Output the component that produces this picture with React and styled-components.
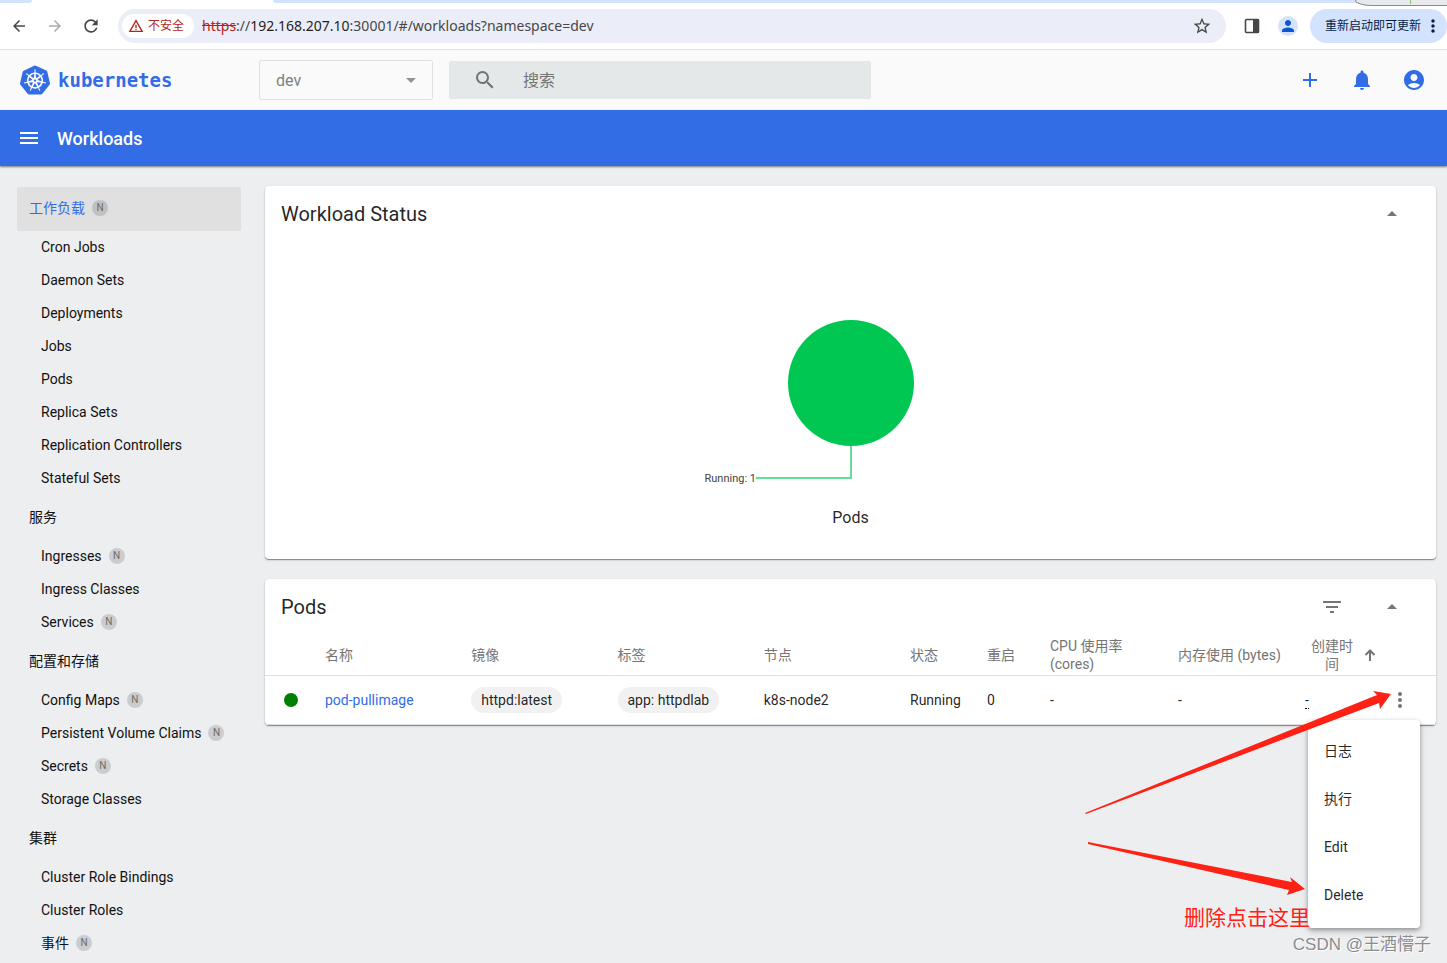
import React, { PureComponent } from 'react';
import styled, { createGlobalStyle } from 'styled-components';
import {
  MdAccountCircle,
  MdAdd,
  MdArrowBack,
  MdArrowDropDown,
  MdArrowDropUp,
  MdArrowForward,
  MdFilterList,
  MdMenu,
  MdMoreVert,
  MdNotifications,
  MdPerson,
  MdRefresh,
  MdSearch,
  MdStarBorder,
  MdWarningAmber
} from 'react-icons/md';
import { SiKubernetes } from 'react-icons/si';

const colors = {
  primary: '#326de6',
  background: '#edeef0',
  text: 'rgba(0, 0, 0, 0.87)',
  muted: 'rgba(0, 0, 0, 0.54)',
  divider: '#e0e0e0',
  chromeBlue: '#d3e3fd',
  annotation: '#ff2113'
};

const GlobalStyle = createGlobalStyle`
  * {
    box-sizing: border-box;
  }
  body {
    margin: 0;
    overflow: hidden;
    background-color: ${colors.background};
    font-family: Roboto, "Noto Sans CJK SC", sans-serif;
    font-size: 14px;
    color: ${colors.text};
  }
  button, input, select {
    font-family: inherit;
  }
`;

const Page = styled.div`
  position: relative;
  min-height: 100vh;
`;

const IconButton = styled.button`
  display: flex;
  align-items: center;
  justify-content: center;
  flex-shrink: 0;
  width: 24px;
  height: 24px;
  padding: 0;
  border: none;
  background: none;
  color: ${({ $color }) => $color || colors.muted};
  cursor: pointer;
`;

/* browser bar */

const TabStrip = styled.div`
  position: relative;
  display: flex;
  height: 3px;
  background-color: #ffffff;
`;

const TabEdge = styled.div`
  width: 32px;
  background-color: ${colors.chromeBlue};
  border-bottom-right-radius: 3px;
`;

const TabRest = styled.div`
  flex: 1;
  margin-left: 241px;
  background-color: ${colors.chromeBlue};
  border-bottom-left-radius: 3px;
`;

const FloatingTip = styled.div`
  position: absolute;
  top: 0;
  right: 0;
  width: 92px;
  height: 6px;
  border-bottom: 1px solid #8a8a8a;
  border-left: 1px solid #8a8a8a;
  border-bottom-left-radius: 16px 6px;
  background: linear-gradient(#8fc36b, #8fc36b) 54px 0 / 1px 4px no-repeat #e8eaed;
`;

const Toolbar = styled.div`
  display: flex;
  align-items: center;
  height: 47px;
  padding-left: 7px;
  border-bottom: 1px solid #dfe1e5;
  background-color: #ffffff;
`;

const NavButtons = styled.div`
  display: flex;
  gap: 12px;
  margin-right: 15px;
`;

const AddressBar = styled.div`
  display: flex;
  align-items: center;
  flex: 1;
  height: 34px;
  padding: 0 12px 0 4px;
  border-radius: 17px;
  background-color: #ebeef8;
`;

const SecurityChip = styled.button`
  display: flex;
  align-items: center;
  gap: 4px;
  height: 24px;
  padding: 0 10px 0 6px;
  border: none;
  border-radius: 12px;
  background-color: #ffffff;
  font-size: 12px;
  line-height: 18px;
  white-space: nowrap;
  color: #b3261e;
`;

const Url = styled.div`
  flex: 1;
  margin-left: 8px;
  font-family: "Noto Sans", sans-serif;
  font-size: 14px;
  line-height: 20px;
  color: #474747;
`;

const Scheme = styled.s`
  color: #b3261e;
`;

const Host = styled.span`
  color: #1f1f1f;
`;

const ToolbarActions = styled.div`
  display: flex;
  align-items: center;
  gap: 12px;
  padding-left: 14px;
`;

const Avatar = styled.button`
  display: flex;
  align-items: center;
  justify-content: center;
  width: 20px;
  height: 20px;
  margin-left: 2px;
  padding: 0;
  border: none;
  border-radius: 50%;
  background-color: ${colors.chromeBlue};
  color: #0b57d0;
`;

const UpdateButton = styled.button`
  display: flex;
  align-items: center;
  gap: 2px;
  height: 34px;
  padding: 0 4px 0 15px;
  border: none;
  border-radius: 17px;
  background-color: ${colors.chromeBlue};
  font-size: 12px;
  line-height: 18px;
  white-space: nowrap;
  color: #041e49;
`;

/* dashboard header */

const Header = styled.header`
  display: flex;
  align-items: center;
  height: 60px;
  padding: 0 21px 0 20px;
  background-color: #fafafa;
`;

const Brand = styled.a`
  display: flex;
  align-items: center;
  gap: 8px;
  flex-shrink: 0;
  width: 239px;
  font-family: "DejaVu Sans Mono", monospace;
  font-size: 19px;
  font-weight: 700;
  text-decoration: none;
  color: ${colors.primary};
`;

const NamespaceField = styled.label`
  position: relative;
  flex-shrink: 0;
  width: 174px;
  margin-right: 16px;
`;

const NamespaceSelect = styled.select`
  display: block;
  width: 100%;
  height: 40px;
  padding: 0 16px;
  border: 1px solid ${colors.divider};
  border-radius: 2px;
  appearance: none;
  background: none;
  font-size: 16px;
  color: #808080;
`;

const SelectArrow = styled.span`
  position: absolute;
  top: 8px;
  right: 10px;
  height: 24px;
  color: #959595;
  pointer-events: none;
`;

const SearchField = styled.label`
  display: flex;
  align-items: center;
  flex: 0 1 422px;
  gap: 26px;
  height: 38px;
  padding-left: 24px;
  border-radius: 2px;
  background-color: #e4e8e8;
  color: #6f7272;
`;

const SearchInput = styled.input`
  flex: 1;
  min-width: 0;
  padding: 0;
  border: none;
  outline: none;
  background: none;
  font-size: 16px;
  &::placeholder {
    color: #757575;
  }
`;

const HeaderActions = styled.div`
  display: flex;
  gap: 28px;
  margin-left: auto;
`;

const TitleBar = styled.div`
  position: relative;
  display: flex;
  align-items: center;
  gap: 16px;
  height: 56px;
  padding: 0 17px;
  background-color: ${colors.primary};
  box-shadow: 0 1px 2px rgba(0, 0, 0, 0.5);
`;

const PageTitle = styled.h1`
  margin: 0;
  font-size: 18px;
  font-weight: 500;
  color: #ffffff;
`;

/* navigation */

const Body = styled.div`
  display: flex;
  gap: 24px;
  padding: 20px 11px 0 17px;
`;

const Nav = styled.nav`
  flex-shrink: 0;
  width: 224px;
`;

const NavItem = styled.a`
  display: flex;
  align-items: center;
  gap: 7px;
  height: 33px;
  padding: 0 0 2px 24px;
  line-height: 20px;
  text-decoration: none;
  color: #111111;
`;

const NavGroupItem = styled(NavItem)`
  height: 44px;
  margin-top: 1px;
  padding-left: 12px;
  border-radius: 2px;
  background-color: ${({ $active }) => ($active ? '#e0e0e0' : 'transparent')};
  color: ${({ $active }) => ($active ? colors.primary : '#111111')};
`;

const NamespacedBadge = styled.span`
  width: 16px;
  height: 16px;
  border-radius: 50%;
  background-color: rgba(0, 0, 0, 0.14);
  font-size: 10px;
  line-height: 16px;
  text-align: center;
  color: #6b6b6b;
`;

/* cards */

const Content = styled.main`
  display: flex;
  flex-direction: column;
  flex: 1;
  gap: 20px;
  min-width: 0;
`;

const Card = styled.section`
  border-radius: 4px;
  background-color: #ffffff;
  box-shadow: 0 1px 1px rgba(0, 0, 0, 0.4), 0 1px 3px rgba(0, 0, 0, 0.12);
`;

const CardHeader = styled.div`
  display: flex;
  align-items: center;
  gap: 36px;
  height: 56px;
  padding: 0 32px 0 16px;
`;

const CardTitle = styled.h2`
  flex: 1;
  margin: 0;
  font-size: 20px;
  font-weight: 400;
`;

const Chart = styled.figure`
  display: flex;
  flex-direction: column;
  align-items: center;
  margin: 0;
  padding-bottom: 29px;
`;

const ChartLabel = styled.text`
  font-size: 11px;
  fill: #444444;
`;

const ChartCaption = styled.figcaption`
  padding-top: 4px;
  font-size: 16px;
  line-height: 24px;
`;

/* pods table */

const Table = styled.table`
  width: 100%;
  border-collapse: separate;
  border-spacing: 0;
  table-layout: fixed;
  text-align: left;
`;

const Column = styled.col`
  width: ${({ $width }) => $width || 'auto'};
`;

const HeadCell = styled.th`
  height: 41px;
  padding: 0;
  border-bottom: 1px solid ${colors.divider};
  font-weight: 400;
  line-height: 18px;
  color: #757575;
`;

const SortLabel = styled.span`
  display: flex;
  align-items: center;
  gap: 8px;
  padding-left: 5px;
  text-align: center;
`;

const SortText = styled.span`
  width: 44px;
`;

const Cell = styled.td`
  height: 49px;
  padding: 0;
  border-bottom: 1px solid ${colors.divider};
  white-space: nowrap;
`;

const ActionCell = styled(Cell)`
  position: relative;
`;

const StatusDot = styled.div`
  width: 14px;
  height: 14px;
  margin-left: 19px;
  border-radius: 50%;
  background-color: #008000;
`;

const PodLink = styled.a`
  text-decoration: none;
  color: ${colors.primary};
`;

const Chip = styled.span`
  display: inline-block;
  padding: 0 10px;
  border-radius: 13px;
  background-color: #f1f1f1;
  line-height: 26px;
`;

const Age = styled.span`
  border-bottom: 1px dotted #000000;
`;

const Menu = styled.div`
  position: absolute;
  top: 44px;
  right: 16px;
  display: flex;
  flex-direction: column;
  width: 112px;
  padding: 8px 0;
  border-radius: 4px;
  background-color: #ffffff;
  box-shadow: 0 2px 4px rgba(0, 0, 0, 0.3), 0 3px 8px rgba(0, 0, 0, 0.14);
`;

const MenuItem = styled.button`
  height: 48px;
  padding: 0 16px 2px;
  border: none;
  background: none;
  font-size: 14px;
  line-height: 20px;
  text-align: left;
  color: ${colors.text};
`;

/* annotations lie over the page */

const Arrows = styled.svg`
  position: absolute;
  top: 680px;
  right: 47px;
  pointer-events: none;
`;

const Note = styled.div`
  position: absolute;
  top: 902px;
  right: 137px;
  font-size: 21px;
  line-height: 32px;
  color: ${colors.annotation};
`;

const Watermark = styled.div`
  position: absolute;
  top: 933px;
  right: 16px;
  font-family: "Liberation Sans", "Noto Sans CJK SC", sans-serif;
  font-size: 17px;
  line-height: 24px;
  color: #8b8c8e;
  text-shadow: 1px 1px 0 #ffffff;
`;

const navGroups = [
  {
    name: '工作负载',
    namespaced: true,
    active: true,
    items: [
      { name: 'Cron Jobs' },
      { name: 'Daemon Sets' },
      { name: 'Deployments' },
      { name: 'Jobs' },
      { name: 'Pods' },
      { name: 'Replica Sets' },
      { name: 'Replication Controllers' },
      { name: 'Stateful Sets' }
    ]
  },
  {
    name: '服务',
    items: [{ name: 'Ingresses', namespaced: true }, { name: 'Ingress Classes' }, { name: 'Services', namespaced: true }]
  },
  {
    name: '配置和存储',
    items: [
      { name: 'Config Maps', namespaced: true },
      { name: 'Persistent Volume Claims', namespaced: true },
      { name: 'Secrets', namespaced: true },
      { name: 'Storage Classes' }
    ]
  },
  {
    name: '集群',
    items: [{ name: 'Cluster Role Bindings' }, { name: 'Cluster Roles' }, { name: '事件', namespaced: true }]
  }
];

const columnWidths = ['60px', null, null, null, null, '77px', '63px', '128px', '127px', '83px', '48px'];

const menuItems = ['日志', '执行', 'Edit', 'Delete'];

const SidePanelIcon = () => (
  <svg width="16" height="16" viewBox="0 0 16 16">
    <rect x="1.5" y="1.5" width="13" height="13" rx="1" fill="none" stroke="#474747" strokeWidth="1.6" />
    <rect x="9" y="1" width="6" height="14" fill="#474747" />
  </svg>
);

const SortIcon = () => (
  <svg width="16" height="16" viewBox="0 0 16 16" fill="none" stroke="currentColor" strokeWidth="2">
    <path d="M8 14V4M3.500 8L8 3.500L12.500 8" />
  </svg>
);

const BrowserBar = () => (
  <>
    <TabStrip>
      <TabEdge />
      <TabRest />
      <FloatingTip />
    </TabStrip>
    <Toolbar>
      <NavButtons>
        <IconButton $color="#474747" aria-label="Back">
          <MdArrowBack size={18} />
        </IconButton>
        <IconButton $color="#ababab" aria-label="Forward">
          <MdArrowForward size={18} />
        </IconButton>
        <IconButton $color="#474747" aria-label="Reload">
          <MdRefresh size={20} />
        </IconButton>
      </NavButtons>
      <AddressBar>
        <SecurityChip>
          <MdWarningAmber size={16} />
          不安全
        </SecurityChip>
        <Url>
          <Scheme>https</Scheme>://<Host>192.168.207.10</Host>:30001/#/workloads?namespace=dev
        </Url>
        <IconButton $color="#474747" aria-label="Bookmark">
          <MdStarBorder size={20} />
        </IconButton>
      </AddressBar>
      <ToolbarActions>
        <IconButton aria-label="Side panel">
          <SidePanelIcon />
        </IconButton>
        <Avatar aria-label="Profile">
          <MdPerson size={18} />
        </Avatar>
        <UpdateButton>
          重新启动即可更新
          <MdMoreVert size={20} />
        </UpdateButton>
      </ToolbarActions>
    </Toolbar>
  </>
);

const StatusChart = () => (
  <Chart>
    <svg width="400" height="260" viewBox="0 0 400 260">
      <circle cx="200" cy="141" r="63" fill="#00c752" />
      <path d="M200 204V236H105" fill="none" stroke="#00c752" strokeOpacity="0.6" strokeWidth="2" />
      <ChartLabel x="105" y="240" textAnchor="end">
        Running: 1
      </ChartLabel>
    </svg>
    <ChartCaption>Pods</ChartCaption>
  </Chart>
);

const PodsTable = () => (
  <Table>
    <colgroup>
      {columnWidths.map((width, index) => (
        <Column key={index} $width={width} />
      ))}
    </colgroup>
    <thead>
      <tr>
        <HeadCell />
        <HeadCell>名称</HeadCell>
        <HeadCell>镜像</HeadCell>
        <HeadCell>标签</HeadCell>
        <HeadCell>节点</HeadCell>
        <HeadCell>状态</HeadCell>
        <HeadCell>重启</HeadCell>
        <HeadCell>
          CPU 使用率
          <br />
          (cores)
        </HeadCell>
        <HeadCell>内存使用 (bytes)</HeadCell>
        <HeadCell>
          <SortLabel>
            <SortText>创建时间</SortText>
            <SortIcon />
          </SortLabel>
        </HeadCell>
        <HeadCell />
      </tr>
    </thead>
    <tbody>
      <tr>
        <Cell>
          <StatusDot />
        </Cell>
        <Cell>
          <PodLink href="#/pod">pod-pullimage</PodLink>
        </Cell>
        <Cell>
          <Chip>httpd:latest</Chip>
        </Cell>
        <Cell>
          <Chip>app: httpdlab</Chip>
        </Cell>
        <Cell>k8s-node2</Cell>
        <Cell>Running</Cell>
        <Cell>0</Cell>
        <Cell>-</Cell>
        <Cell>-</Cell>
        <Cell>
          <Age>-</Age>
        </Cell>
        <ActionCell>
          <IconButton aria-label="Actions">
            <MdMoreVert size={24} />
          </IconButton>
          <Menu role="menu">
            {menuItems.map((item) => (
              <MenuItem key={item} role="menuitem">
                {item}
              </MenuItem>
            ))}
          </Menu>
        </ActionCell>
      </tr>
    </tbody>
  </Table>
);

class App extends PureComponent {
  render() {
    return (
      <Page>
        <GlobalStyle />
        <BrowserBar />
        <Header>
          <Brand href="#/">
            <SiKubernetes size={30} />
            kubernetes
          </Brand>
          <NamespaceField>
            <NamespaceSelect defaultValue="dev" aria-label="Namespace">
              <option value="dev">dev</option>
            </NamespaceSelect>
            <SelectArrow>
              <MdArrowDropDown size={24} />
            </SelectArrow>
          </NamespaceField>
          <SearchField>
            <MdSearch size={24} />
            <SearchInput type="text" placeholder="搜索" aria-label="搜索" />
          </SearchField>
          <HeaderActions>
            <IconButton $color={colors.primary} aria-label="Create">
              <MdAdd size={24} />
            </IconButton>
            <IconButton $color={colors.primary} aria-label="Notifications">
              <MdNotifications size={24} />
            </IconButton>
            <IconButton $color={colors.primary} aria-label="Account">
              <MdAccountCircle size={24} />
            </IconButton>
          </HeaderActions>
        </Header>
        <TitleBar>
          <IconButton $color="#ffffff" aria-label="Menu">
            <MdMenu size={24} />
          </IconButton>
          <PageTitle>Workloads</PageTitle>
        </TitleBar>
        <Body>
          <Nav>
            {navGroups.map((group) => (
              <React.Fragment key={group.name}>
                <NavGroupItem href="#/workloads" $active={group.active}>
                  {group.name}
                  {group.namespaced && <NamespacedBadge>N</NamespacedBadge>}
                </NavGroupItem>
                {group.items.map(this.renderNavItem)}
              </React.Fragment>
            ))}
          </Nav>
          <Content>
            <Card>
              <CardHeader>
                <CardTitle>Workload Status</CardTitle>
                <IconButton aria-label="Collapse">
                  <MdArrowDropUp size={24} />
                </IconButton>
              </CardHeader>
              <StatusChart />
            </Card>
            <Card>
              <CardHeader>
                <CardTitle>Pods</CardTitle>
                <IconButton aria-label="Filter">
                  <MdFilterList size={24} />
                </IconButton>
                <IconButton aria-label="Collapse">
                  <MdArrowDropUp size={24} />
                </IconButton>
              </CardHeader>
              <PodsTable />
            </Card>
          </Content>
        </Body>
        <Arrows width="320" height="220" viewBox="0 0 320 220" fill={colors.annotation}>
          <path d="M5 133L297 15L293 11L311 14L300 29L299 23L6 134Z" />
          <path d="M8 162L212 202L210 197L225 209L207 215L209 210L8 164Z" />
        </Arrows>
        <Note>删除点击这里</Note>
        <Watermark>CSDN @王酒懵子</Watermark>
      </Page>
    );
  }

  renderNavItem = ({ name, namespaced }) => (
    <NavItem key={name} href="#/workloads">
      {name}
      {namespaced && <NamespacedBadge>N</NamespacedBadge>}
    </NavItem>
  );
}

export default App;
